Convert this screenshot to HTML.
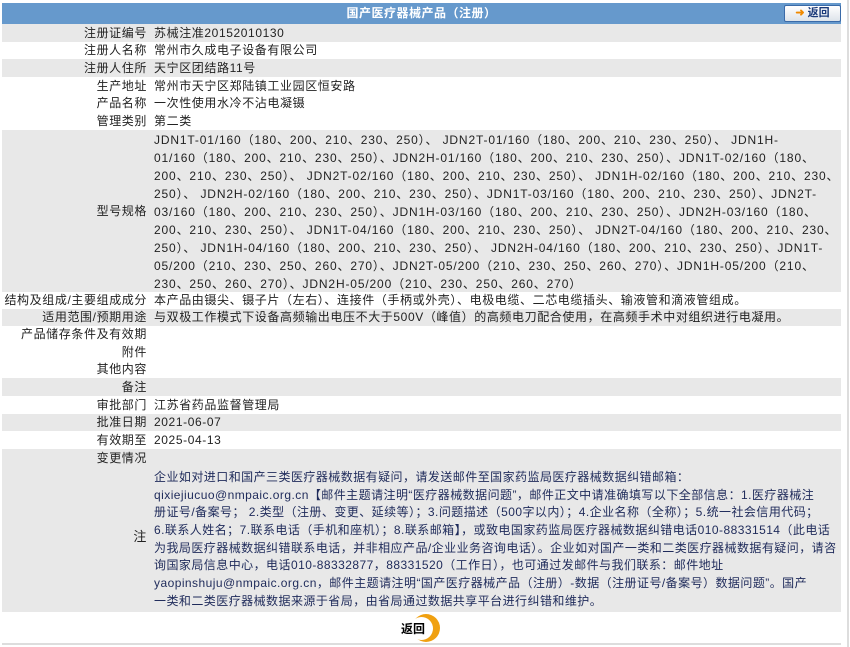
<!DOCTYPE html>
<html><head><meta charset="utf-8"><style>
body{margin:0;width:850px;height:647px;background:#fff;position:relative;overflow:hidden;font-family:"Liberation Sans","Noto Sans CJK SC",sans-serif;font-size:12px;color:#222}
.r{position:absolute;left:2px;width:839px}
.g{background:#e8e8e8}
.l{position:absolute;right:694px;text-align:right;white-space:nowrap;letter-spacing:0.6px}
.v{position:absolute;left:152px;white-space:nowrap;letter-spacing:0.6px}
.ml div{height:18px;line-height:18px;white-space:nowrap;letter-spacing:0.85px}
.note div{height:17.7px;line-height:17.7px;white-space:nowrap;color:#1e2a5a;letter-spacing:0.45px}
</style></head><body>
<div style="position:absolute;left:847px;top:0;width:2px;height:647px;background:#ddd"></div>
<div class="r" style="top:3px;height:21px;background:#6699cc;color:#fff;font-weight:bold;text-align:center;line-height:21px;letter-spacing:0.5px">国产医疗器械产品（注册）</div>
<div style="position:absolute;left:784px;top:5px;width:55px;height:15px;border:1px solid #3a6aa8;border-radius:2px;background:linear-gradient(#fff,#dde3ea);font-size:11px;font-weight:bold;color:#1a3a7a;line-height:15px;text-align:center"><span style="color:#f08a00">➜</span> 返回</div>

<div class="r g" style="top:24px;height:18px;line-height:18px"><span class="l">注册证编号</span><span class="v">苏械注准20152010130</span></div>
<div class="r" style="top:42px;height:17px;line-height:17px"><span class="l">注册人名称</span><span class="v">常州市久成电子设备有限公司</span></div>
<div class="r g" style="top:59px;height:18px;line-height:18px"><span class="l">注册人住所</span><span class="v">天宁区团结路11号</span></div>
<div class="r" style="top:77px;height:18px;line-height:18px"><span class="l">生产地址</span><span class="v">常州市天宁区郑陆镇工业园区恒安路</span></div>
<div class="r" style="top:95px;height:17px;line-height:17px"><span class="l">产品名称</span><span class="v">一次性使用水冷不沾电凝镊</span></div>
<div class="r" style="top:112px;height:18px;line-height:18px"><span class="l">管理类别</span><span class="v">第二类</span></div>
<div class="r g" style="top:130px;height:162px"><span class="l" style="top:72px;line-height:18px">型号规格</span>
<div class="v ml" style="top:1px">
<div>JDN1T-01/160（180、200、210、230、250）、 JDN2T-01/160（180、200、210、230、250）、 JDN1H-</div>
<div>01/160（180、200、210、230、250）、JDN2H-01/160（180、200、210、230、250）、JDN1T-02/160（180、</div>
<div>200、210、230、250）、 JDN2T-02/160（180、200、210、230、250）、 JDN1H-02/160（180、200、210、230、</div>
<div>250）、 JDN2H-02/160（180、200、210、230、250）、JDN1T-03/160（180、200、210、230、250）、JDN2T-</div>
<div>03/160（180、200、210、230、250）、JDN1H-03/160（180、200、210、230、250）、JDN2H-03/160（180、</div>
<div>200、210、230、250）、 JDN1T-04/160（180、200、210、230、250）、 JDN2T-04/160（180、200、210、230、</div>
<div>250）、 JDN1H-04/160（180、200、210、230、250）、 JDN2H-04/160（180、200、210、230、250）、JDN1T-</div>
<div>05/200（210、230、250、260、270）、JDN2T-05/200（210、230、250、260、270）、JDN1H-05/200（210、</div>
<div>230、250、260、270）、JDN2H-05/200（210、230、250、260、270）</div>
</div></div>
<div class="r" style="top:292px;height:17px;line-height:17px"><span class="l">结构及组成/主要组成成分</span><span class="v">本产品由镊尖、镊子片（左右）、连接件（手柄或外壳）、电极电缆、二芯电缆插头、输液管和滴液管组成。</span></div>
<div class="r g" style="top:309px;height:17px;line-height:17px"><span class="l">适用范围/预期用途</span><span class="v">与双极工作模式下设备高频输出电压不大于500V（峰值）的高频电刀配合使用，在高频手术中对组织进行电凝用。</span></div>
<div class="r" style="top:326px;height:17px;line-height:17px"><span class="l">产品储存条件及有效期</span></div>
<div class="r" style="top:343px;height:18px;line-height:18px"><span class="l">附件</span></div>
<div class="r" style="top:361px;height:17px;line-height:17px"><span class="l">其他内容</span></div>
<div class="r g" style="top:378px;height:18px;line-height:18px"><span class="l">备注</span></div>
<div class="r" style="top:396px;height:18px;line-height:18px"><span class="l">审批部门</span><span class="v">江苏省药品监督管理局</span></div>
<div class="r g" style="top:414px;height:17px;line-height:17px"><span class="l">批准日期</span><span class="v">2021-06-07</span></div>
<div class="r" style="top:431px;height:18px;line-height:18px"><span class="l">有效期至</span><span class="v">2025-04-13</span></div>
<div class="r g" style="top:449px;height:18px;line-height:18px"><span class="l">变更情况</span></div>
<div class="r g" style="top:467px;height:145px"><span class="l" style="top:61px;line-height:18px;font-size:13px">注</span>
<div class="v note" style="top:2px">
<div>企业如对进口和国产三类医疗器械数据有疑问，请发送邮件至国家药监局医疗器械数据纠错邮箱：</div>
<div>qixiejiucuo@nmpaic.org.cn【邮件主题请注明“医疗器械数据问题”，邮件正文中请准确填写以下全部信息：1.医疗器械注</div>
<div>册证号/备案号； 2.类型（注册、变更、延续等）；3.问题描述（500字以内）；4.企业名称（全称）；5.统一社会信用代码；</div>
<div>6.联系人姓名；7.联系电话（手机和座机）；8.联系邮箱】，或致电国家药监局医疗器械数据纠错电话010-88331514（此电话</div>
<div>为我局医疗器械数据纠错联系电话，并非相应产品/企业业务咨询电话）。企业如对国产一类和二类医疗器械数据有疑问，请咨</div>
<div>询国家局信息中心，电话010-88332877，88331520（工作日），也可通过发邮件与我们联系：邮件地址</div>
<div>yaopinshuju@nmpaic.org.cn，邮件主题请注明“国产医疗器械产品（注册）-数据（注册证号/备案号）数据问题”。国产</div>
<div>一类和二类医疗器械数据来源于省局，由省局通过数据共享平台进行纠错和维护。</div>
</div></div>
<div style="position:absolute;left:412px;top:614px;width:28px;height:28px;border-radius:50%;background:#f0a010"></div>
<div style="position:absolute;left:410px;top:617px;width:23px;height:23px;border-radius:50%;background:#fff"></div>
<div style="position:absolute;left:401px;top:620px;font-weight:bold;font-size:12px;color:#000">返回</div>
<div style="position:absolute;left:2px;top:643px;width:839px;height:2px;background:#ddd"></div>
</body></html>
